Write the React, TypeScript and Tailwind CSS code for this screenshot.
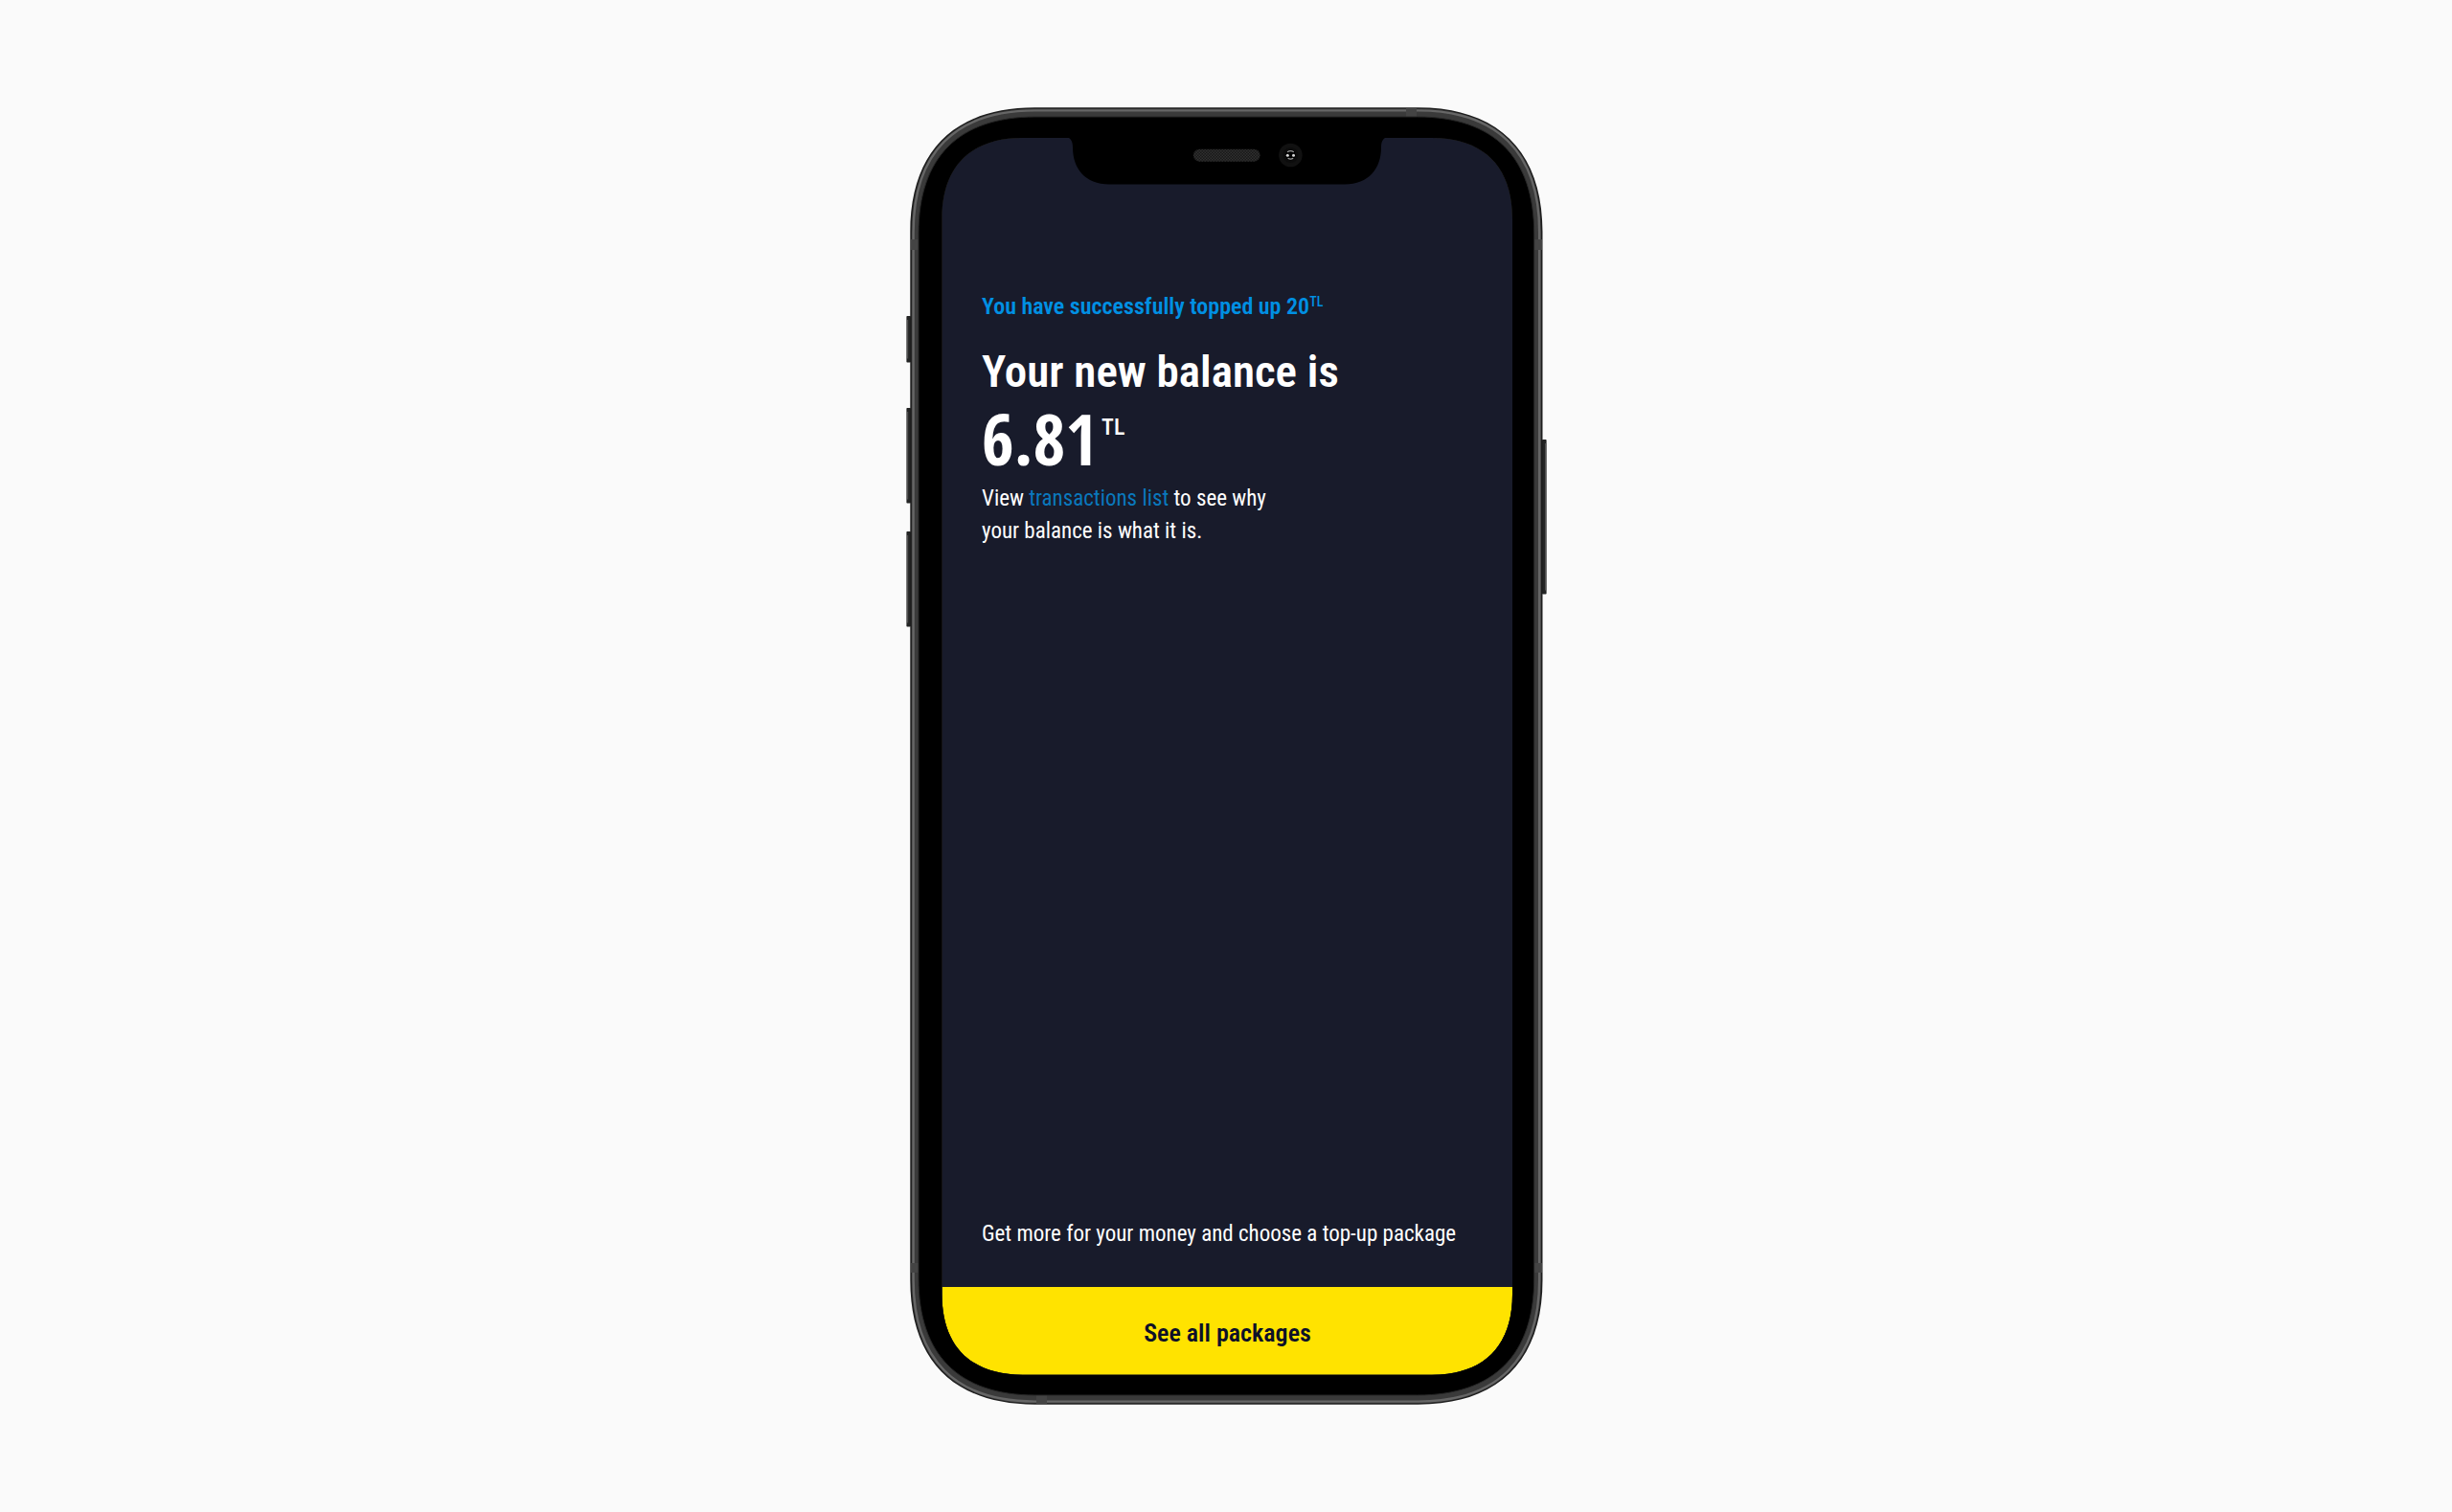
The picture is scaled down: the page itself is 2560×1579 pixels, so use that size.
type Box = { left: number; top: number; right: number; bottom: number };

// Rounded rectangle with continuous corners: `reach` is where the curve starts,
// `pull` is how far its control points stay away from the corner.
const squircle = ({ left, top, right, bottom }: Box, reach: number, pull: number) =>
  [
    `M${left + reach} ${top}`,
    `H${right - reach}`,
    `C${right - pull} ${top} ${right} ${top + pull} ${right} ${top + reach}`,
    `V${bottom - reach}`,
    `C${right} ${bottom - pull} ${right - pull} ${bottom} ${right - reach} ${bottom}`,
    `H${left + reach}`,
    `C${left + pull} ${bottom} ${left} ${bottom - pull} ${left} ${bottom - reach}`,
    `V${top + reach}`,
    `C${left} ${top + pull} ${left + pull} ${top} ${left + reach} ${top}Z`,
  ].join(" ");

const outerEdge = squircle({ left: 0.3, top: 0.3, right: 660.5, bottom: 1354.7 }, 130, 46);
const steel = squircle({ left: 1.8, top: 1.6, right: 659, bottom: 1353.4 }, 129, 45);
const shine = squircle({ left: 3.6, top: 3.4, right: 657.2, bottom: 1351.6 }, 127, 44);
const glassEdge = squircle({ left: 9, top: 10, right: 651.7, bottom: 1345 }, 122, 42);
const screenEdge = squircle({ left: 33.5, top: 32, right: 629, bottom: 1323.7 }, 84, 30);

const notch =
  "M162 31C167 31.5 170 34 170 42C170 64 183 80.4 208 80.4H454C479 80.4 492 64 492 42C492 34 495 31.5 500 31Z";

const antennaBands = [
  { x: 1, y: 138, width: 8, height: 11 },
  { x: 652, y: 138, width: 8, height: 11 },
  { x: 1, y: 1207, width: 8, height: 10 },
  { x: 652, y: 1207, width: 8, height: 10 },
  { x: 518, y: 1, width: 11, height: 9 },
  { x: 132, y: 1345, width: 11, height: 9 },
];

const sideButtons = [
  { x: -3.6, y: 218, height: 48.5, light: -3 },
  { x: -3.6, y: 314, height: 99.5, light: -3 },
  { x: -3.6, y: 443, height: 99.5, light: -3 },
  { x: 660, y: 347, height: 161.5, light: 663 },
];

const DeviceFrame = () => (
  <svg
    viewBox="0 0 660 1355"
    className="pointer-events-none absolute inset-0 h-full w-full overflow-visible"
    aria-hidden="true"
  >
    <defs>
      <pattern id="grille" width="3" height="3" patternUnits="userSpaceOnUse">
        <rect width="3" height="3" fill="#181818" />
        <rect width="1.5" height="1.5" fill="#303030" />
        <rect x="1.5" y="1.5" width="1.5" height="1.5" fill="#303030" />
      </pattern>
    </defs>

    {sideButtons.map((button) => (
      <g key={button.y}>
        <rect x={button.x} y={button.y} width="4.6" height={button.height} rx="0.8" fill="#232424" />
        <rect x={button.light} y={button.y + 4} width="1.2" height={button.height - 8} fill="#505050" />
      </g>
    ))}

    <path d={`${outerEdge} ${screenEdge}`} fillRule="evenodd" fill="#1d1d1d" />
    <path d={`${steel} ${screenEdge}`} fillRule="evenodd" fill="#3a3a3a" />
    <path d={shine} fill="none" stroke="#666666" strokeWidth="2.4" />
    {antennaBands.map((band) => (
      <rect key={`${band.x}-${band.y}`} {...band} fill="#444444" />
    ))}
    <path d={`${glassEdge} ${screenEdge}`} fillRule="evenodd" fill="#000000" />
    <path d={glassEdge} fill="none" stroke="#262626" strokeWidth="1" />
    <path d={notch} fill="#000000" />

    <rect x="296" y="43.7" width="69.5" height="13" rx="6.5" fill="url(#grille)" />

    <circle cx="397.4" cy="50" r="12.3" fill="#111111" />
    <circle cx="397.4" cy="50" r="8" fill="#0c0c0c" />
    <circle cx="397.4" cy="50" r="5.4" fill="#000000" />
    <path
      d="M394 46.8Q397.4 44.6 400.8 46.8M394.6 53.2Q397.4 55 400.2 53.2"
      fill="none"
      stroke="#9a9a9a"
      strokeWidth="1.2"
    />
    <circle cx="394.3" cy="50.2" r="1.5" fill="#d8d8d8" />
    <circle cx="400.5" cy="50.2" r="1.5" fill="#d8d8d8" />
  </svg>
);

const TopUpScreen = () => (
  <div className="flex flex-1 flex-col overflow-hidden rounded-[64px] bg-[#181b2b] text-white">
    <div className="flex flex-1 flex-col px-[42px] pt-40 pb-[38px]">
      <p className="text-[24px] leading-8 font-semibold text-[#0090e3]">
        You have successfully topped up 20
        <sup className="-top-2 align-baseline text-[14px] leading-none font-medium">TL</sup>
      </p>
      <h1 className="mt-6 text-[47px] leading-14 font-semibold">Your new balance is</h1>
      <p className="mt-1.5 flex items-start gap-1">
        <span className="font-['Open_Sans_Condensed','Roboto_Condensed',sans-serif] text-[73px] leading-18 font-bold">
          6.81
        </span>
        <span className="mt-2 text-[24px] leading-8 font-medium">TL</span>
      </p>
      <p className="mt-2.5 text-[23px] leading-[34px]">
        View{" "}
        <a href="#transactions" className="text-[#0a78bd]">
          transactions list
        </a>{" "}
        to see why
        <br />
        your balance is what it is.
      </p>
      <p className="mt-auto text-[23px] leading-[34px]">Get more for your money and choose a top-up package</p>
    </div>
    <button type="button" className="bg-[#ffe300] pt-8 pb-7 text-[26px] leading-8 font-semibold text-[#0d1028]">
      See all packages
    </button>
  </div>
);

export default function App() {
  return (
    <main className="flex min-h-screen items-center justify-center bg-[#fafafa] font-['Roboto_Condensed',Roboto,sans-serif]">
      <div className="relative flex aspect-[660/1355] w-[660px] flex-col pt-8 pr-[30px] pb-[31px] pl-[33px]">
        <TopUpScreen />
        <DeviceFrame />
      </div>
    </main>
  );
}
